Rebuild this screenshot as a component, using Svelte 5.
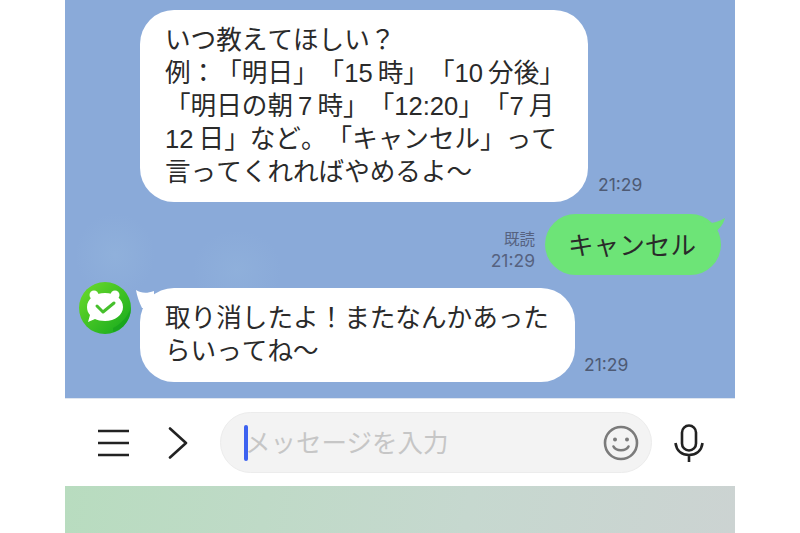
<script>
	const first = [
		'いつ教えてほしい？',
		'例：「明日」「15\u2009時」「10\u2009分後」',
		'「明日の朝\u20097\u2009時」「12:20」「7\u2009月',
		'12\u2009日」など。「キャンセル」って',
		'言ってくれればやめるよ〜'
	]
	const last = ['取り消したよ！またなんかあった', 'らいってね〜']
</script>

<div class="phone">
	<main class="chat">
		<div class="row in first">
			<div class="bubble big">
				{#each first as line}
					<div>{line}</div>
				{/each}
			</div>
			<span class="time">21:29</span>
		</div>

		<div class="row out">
			<div class="meta">
				<span>既読</span>
				<span>21:29</span>
			</div>
			<div class="bubble green">
				キャンセル
				<svg class="tail-r" width="24" height="20" viewBox="0 0 24 20">
					<path d="M0 6 C6 9 14 9 24 3 C22 10 18 15 12 18 Z" fill="#6de477" />
				</svg>
			</div>
		</div>

		<div class="row in last">
			<svg class="avatar" width="52" height="52" viewBox="0 0 52 52">
				<defs>
					<linearGradient id="av" x1="0" y1="0" x2="1" y2="1">
						<stop offset="0" stop-color="#6fdc2c" />
						<stop offset="1" stop-color="#12a81c" />
					</linearGradient>
				</defs>
				<circle cx="26" cy="26" r="26" fill="url(#av)" />
				<path d="M34 46 C42 42 47 36 50 30 L52 26 C52 38 44 47 34 50 Z" fill="#0f9a1b" opacity=".5" />
				<circle cx="15" cy="13" r="4.5" fill="#fff" />
				<circle cx="36" cy="13" r="4.5" fill="#fff" />
				<path d="M26 11 C36 11 44 17 44 25 C44 33 36 39 26 39 C22 39 18 38 16 37 L9 40 L11 33 C9 31 8 28 8 25 C8 17 16 11 26 11 Z" fill="#fff" />
				<path d="M18 24 L24 30 L35 21" fill="none" stroke="#46c02c" stroke-width="3" stroke-linecap="round" stroke-linejoin="round" />
			</svg>
			<div class="bubble small">
				<svg class="tail-l" width="20" height="20" viewBox="0 0 20 20">
					<path d="M0 0 C5 3 10 4 18 1 L18 18 L6 18 C3 12 1 6 0 0 Z" fill="#fff" />
				</svg>
				{#each last as line}
					<div>{line}</div>
				{/each}
			</div>
			<span class="time">21:29</span>
		</div>
	</main>

	<div class="inputbar">
		<svg class="ico" width="34" height="30" viewBox="0 0 34 30">
			<path d="M1 3 H32 M1 15 H32 M1 27 H32" stroke="#222" stroke-width="2.6" fill="none" />
		</svg>
		<svg class="ico chev" width="20" height="32" viewBox="0 0 20 32">
			<path d="M2 1.5 L18 16 L2 30.5" stroke="#222" stroke-width="2.6" fill="none" stroke-linecap="round" stroke-linejoin="round" />
		</svg>
		<div class="field">
			<span class="caret"></span>
			<span class="placeholder">メッセージを入力</span>
			<svg class="smile" width="36" height="36" viewBox="0 0 36 36">
				<circle cx="18" cy="18" r="16" fill="none" stroke="#7b7b7b" stroke-width="2.6" />
				<circle cx="12" cy="14.5" r="2" fill="#7b7b7b" />
				<circle cx="24" cy="14.5" r="2" fill="#7b7b7b" />
				<path d="M10.5 21.5 C13 26.5 23 26.5 25.5 21.5" fill="none" stroke="#7b7b7b" stroke-width="2.6" stroke-linecap="round" />
			</svg>
		</div>
		<svg class="mic" width="30" height="38" viewBox="0 0 30 38">
			<rect x="8" y="1.5" width="14" height="25" rx="7" fill="none" stroke="#222" stroke-width="2.6" />
			<path d="M1.5 19 C2.5 27 8 31 15 31 C22 31 27.5 27 28.5 19 M15 31 V38" fill="none" stroke="#222" stroke-width="2.6" />
		</svg>
	</div>

	<div class="footer"></div>
</div>

<style>
	:global(body) {
		background: #fff;
		font-family: "Noto Sans CJK JP", "Noto Sans", sans-serif;
	}
	.phone {
		width: 670px;
		height: 533px;
		margin: 0 65px;
		display: flex;
		flex-direction: column;
		overflow: hidden;
	}
	.chat {
		height: 399px;
		flex: none;
		box-sizing: border-box;
		padding-top: 10px;
		background-color: #8aaad9;
		background-image:
			radial-gradient(ellipse 40px 42px at 50px 255px, rgba(160, 195, 225, 0.25), transparent),
			radial-gradient(ellipse 45px 40px at 172px 270px, rgba(160, 195, 225, 0.22), transparent);
		border-bottom: 1px solid #dfe6f0;
	}
	.row {
		display: flex;
		align-items: flex-end;
	}
	.first {
		padding-left: 75px;
	}
	.bubble {
		position: relative;
		font-family: "Liberation Sans", "Noto Sans CJK JP", sans-serif;
		font-size: 25.6px;
		line-height: 33px;
		color: #2a2a2a;
		white-space: nowrap;
		text-spacing-trim: space-all;
		font-kerning: none;
	}
	.big {
		width: 448px;
		height: 192px;
		box-sizing: border-box;
		padding: 14px 0 0 25px;
		background: #fff;
		border-radius: 34px;
	}
	.time {
		margin: 0 0 7px 10px;
		font-size: 17.5px;
		line-height: 20px;
		color: #4e5a74;
		font-family: "Inter", sans-serif;
	}
	.last .time {
		margin-left: 9px;
	}
	.out {
		justify-content: flex-end;
		margin-top: 12px;
		padding-right: 14px;
	}
	.meta {
		display: flex;
		flex-direction: column;
		align-items: flex-end;
		margin: 0 10px 4px 0;
		font-size: 15.5px;
		line-height: 21px;
		color: #566280;
		font-family: "Inter", "Noto Sans CJK JP", sans-serif;
	}
	.meta span:last-child {
		font-size: 17.5px;
	}
	.green {
		width: 176px;
		height: 61px;
		line-height: 60px;
		padding: 2px 2px 0 0;
		box-sizing: border-box;
		text-align: center;
		background: #6de477;
		border-radius: 31px;
	}
	.tail-r {
		position: absolute;
		right: -4px;
		top: 1px;
	}
	.last {
		margin-top: 13px;
		padding-left: 14px;
	}
	.avatar {
		align-self: flex-start;
		margin: -6px 9px 0 0;
	}
	.small {
		width: 435px;
		height: 94px;
		box-sizing: border-box;
		padding: 14px 0 0 25px;
		background: #fff;
		border-radius: 34px;
	}
	.tail-l {
		position: absolute;
		left: -4px;
		top: 2px;
	}
	.small div {
		position: relative;
	}
	.inputbar {
		height: 87px;
		flex: none;
		display: flex;
		align-items: center;
		background: #fff;
		padding-left: 32px;
	}
	.chev {
		margin-left: 37px;
	}
	.field {
		display: flex;
		align-items: center;
		width: 432px;
		height: 61px;
		box-sizing: border-box;
		margin-left: 32px;
		padding-left: 23px;
		background: #f3f3f3;
		border: 1px solid #ececec;
		border-radius: 31px;
	}
	.caret {
		width: 4px;
		height: 36px;
		border-radius: 2px;
		background: #3d62f0;
	}
	.placeholder {
		font-size: 25.5px;
		line-height: 30px;
		padding-bottom: 4px;
		color: #c6c6c6;
		white-space: nowrap;
		margin-left: -3px;
	}
	.smile {
		margin-left: auto;
		margin-right: 12px;
	}
	.mic {
		margin-left: 22px;
	}
	.footer {
		flex: 1;
		background: linear-gradient(100deg, #b8dcbf, #c6d8cf 60%, #ccd3d2);
	}
</style>
